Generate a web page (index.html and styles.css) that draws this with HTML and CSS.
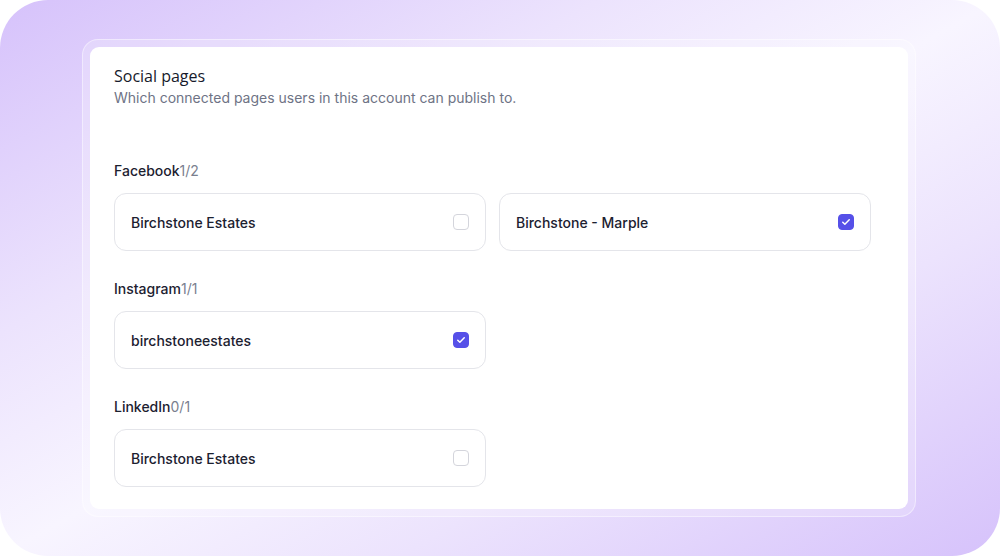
FILE: index.html
```html
<!DOCTYPE html>
<html lang="en">
<head>
<meta charset="utf-8">
<title>Social pages</title>
<link rel="stylesheet" href="styles.css">
</head>
<body>
<div class="backdrop">
  <div class="frame">
    <section class="card">
      <header class="card-head">
        <h1 class="title">Social pages</h1>
        <p class="subtitle">Which connected pages users in this account can publish to.</p>
      </header>

      <div class="groups">
        <div class="group">
          <div class="group-label">Facebook<span class="count">1/2</span></div>
          <div class="options">
            <label class="option">
              <span class="option-name">Birchstone Estates</span>
              <span class="check"></span>
            </label>
            <label class="option">
              <span class="option-name">Birchstone - Marple</span>
              <span class="check is-on"><svg viewBox="0 0 16 16" width="16" height="16"><path d="M4.3 8.2l2.4 2.3 5-5" fill="none" stroke="#fff" stroke-width="1.7" stroke-linecap="round" stroke-linejoin="round"/></svg></span>
            </label>
          </div>
        </div>

        <div class="group">
          <div class="group-label">Instagram<span class="count">1/1</span></div>
          <div class="options">
            <label class="option">
              <span class="option-name">birchstoneestates</span>
              <span class="check is-on"><svg viewBox="0 0 16 16" width="16" height="16"><path d="M4.3 8.2l2.4 2.3 5-5" fill="none" stroke="#fff" stroke-width="1.7" stroke-linecap="round" stroke-linejoin="round"/></svg></span>
            </label>
          </div>
        </div>

        <div class="group">
          <div class="group-label">LinkedIn<span class="count">0/1</span></div>
          <div class="options">
            <label class="option">
              <span class="option-name">Birchstone Estates</span>
              <span class="check"></span>
            </label>
          </div>
        </div>
      </div>
    </section>
  </div>
</div>
</body>
</html>
```

FILE: styles.css
```css
* { box-sizing: border-box; }

html, body {
  margin: 0;
  padding: 0;
  background: #ffffff;
}

body {
  font-family: Inter, "Liberation Sans", sans-serif;
  color: #1c2130;
}

.backdrop {
  width: 1000px;
  height: 556px;
  border-radius: 48px;
  background: linear-gradient(to bottom right, #d6c2fb 0%, #ece3fd 30%, #f8f5ff 50%, #ece3fd 70%, #d6c2fb 100%);
  padding: 39px 84px 39px 82px;
}

.frame {
  height: 100%;
  padding: 7px;
  border-radius: 16px;
  background: rgba(255, 255, 255, 0.22);
  border: 1px solid rgba(255, 255, 255, 0.45);
}

.card {
  height: 100%;
  background: #ffffff;
  border-radius: 9px;
  padding: 19px 24px 24px;
}

.card-head {
  margin-bottom: 53px;
}

.title {
  margin: 0;
  font-family: "Open Sans", "Lato", sans-serif;
  font-size: 16px;
  font-weight: 500;
  line-height: 20px;
  color: #161a2b;
}

.subtitle {
  margin: 2px 0 0;
  font-size: 14px;
  line-height: 20px;
  color: #6e7385;
}

.groups {
  display: flex;
  flex-direction: column;
  gap: 28px;
}

.group-label {
  font-size: 14px;
  font-weight: 500;
  line-height: 20px;
  color: #1c2130;
  margin-bottom: 12px;
}

.count {
  color: #7a7f8f;
  font-weight: 400;
}

.options {
  display: grid;
  grid-template-columns: 372px 372px;
  gap: 13px;
}

.option {
  height: 58px;
  display: flex;
  align-items: center;
  justify-content: space-between;
  padding: 0 16px 0 16px;
  border: 1px solid #e4e5ea;
  border-radius: 12px;
  background: #ffffff;
}

.option-name {
  font-size: 14px;
  font-weight: 500;
  color: #1c2130;
}

.check {
  width: 16px;
  height: 16px;
  border: 1px solid #d4d5dc;
  border-radius: 4px;
  display: flex;
  align-items: center;
  justify-content: center;
}

.check.is-on {
  background: #5650e8;
  border-color: #5650e8;
}

.check svg {
  display: block;
}
```
